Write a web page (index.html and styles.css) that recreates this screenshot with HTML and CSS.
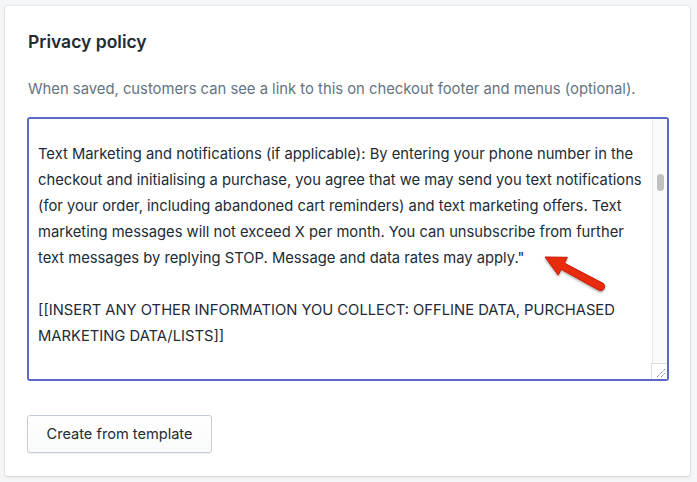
FILE: index.html
```html
<!DOCTYPE html>
<html>
<head>
<meta charset="utf-8">
<link rel="stylesheet" href="styles.css">
</head>
<body>
<div class="card">
  <h2 class="title">Privacy policy</h2>
  <p class="help">When saved, customers can see a link to this on checkout footer and menus (optional).</p>
  <div class="field">
    <div class="content">
      <div class="line">Text Marketing and notifications (if applicable): By entering your phone number in the</div>
      <div class="line">checkout and initialising a purchase, you agree that we may send you text notifications</div>
      <div class="line">(for your order, including abandoned cart reminders) and text marketing offers. Text</div>
      <div class="line">marketing messages will not exceed X per month. You can unsubscribe from further</div>
      <div class="line">text messages by replying STOP. Message and data rates may apply."</div>
      <div class="line">&nbsp;</div>
      <div class="line">[[INSERT ANY OTHER INFORMATION YOU COLLECT: OFFLINE DATA, PURCHASED</div>
      <div class="line">MARKETING DATA/LISTS]]</div>
    </div>
    <div class="scrollbar">
      <div class="thumb"></div>
      <div class="grip">
        <svg width="15" height="15" viewBox="0 0 15 15"><path d="M5 13 L13 5 M9 13 L13 9" stroke="#555" stroke-width="1" stroke-dasharray="1 1" fill="none"/></svg>
      </div>
    </div>
  </div>
  <div class="actions">
    <button class="btn">Create from template</button>
  </div>
</div>
<svg class="arrow" width="697" height="482" viewBox="0 0 697 482">
  <defs>
    <filter id="sh" x="-20%" y="-20%" width="140%" height="160%">
      <feDropShadow dx="0" dy="1.5" stdDeviation="1.2" flood-color="#000" flood-opacity="0.35"/>
    </filter>
  </defs>
  <path d="M545 257 L567.4 257.3 L564.4 263.1 L603.5 283.6 Q606 286 603.5 289.5 Q601 291.5 598.5 290 L561.2 269.3 L558.2 275.1 Z" fill="#e8290e" stroke="#c81c05" stroke-width="1" stroke-linejoin="round" filter="url(#sh)"/>
</svg>
</body>
</html>
```
FILE: styles.css
```css
html, body {
  margin: 0;
  padding: 0;
}
body {
  background: #f4f6f8;
  width: 697px;
  height: 482px;
  padding: 6px 7px 6px 5px;
  box-sizing: border-box;
  font-family: Inter, "Liberation Sans", sans-serif;
  color: #212b36;
  position: relative;
}
.card {
  background: #fff;
  border-radius: 3px;
  box-shadow: 0 0 0 1px rgba(63, 63, 68, 0.05), 0 1px 3px 0 rgba(63, 63, 68, 0.15);
  height: 470px;
  box-sizing: border-box;
  padding: 24px 21px 0 22px;
}
.title {
  margin: 0 0 0 1px;
  font-size: 17.5px;
  font-weight: 600;
  line-height: 24px;
  color: #212b36;
}
.help {
  margin: 25px 0 0 1px;
  font-size: 14.8px;
  line-height: 20px;
  color: #637381;
}
.field {
  margin-top: 18px;
  height: 264px;
  box-sizing: border-box;
  border: 2px solid #5c6ac4;
  border-radius: 3px;
  display: flex;
  overflow: hidden;
}
.content {
  flex: 1;
  padding: 22px 0 0 9px;
  font-size: 14.75px;
  line-height: 26px;
  color: #212b36;
  overflow: hidden;
}
.line {
  white-space: nowrap;
}
.scrollbar {
  width: 15px;
  box-sizing: border-box;
  border-left: 1px solid #e8e8e8;
  background: #fafafa;
  display: flex;
  flex-direction: column;
  align-items: center;
}
.thumb {
  width: 7px;
  height: 17px;
  margin-top: 55px;
  margin-left: 1px;
  border-radius: 4px;
  background: #c1c1c1;
}
.grip {
  margin-top: auto;
  width: 16px;
  height: 16px;
  margin-left: -2px;
  box-sizing: border-box;
  border-top: 1px solid #dcdcdc;
  border-left: 1px solid #dcdcdc;
  background: #fff;
}
.grip svg {
  display: block;
}
.actions {
  margin-top: 34px;
  display: flex;
}
.btn {
  width: 185px;
  height: 38px;
  border: 1px solid #c4cdd5;
  border-radius: 3px;
  background: linear-gradient(to bottom, #fff, #f9fafb);
  box-shadow: 0 1px 0 0 rgba(22, 29, 37, 0.05);
  font-family: Inter, "Liberation Sans", sans-serif;
  font-size: 14.6px;
  color: #212b36;
  padding: 0;
}
.arrow {
  position: absolute;
  left: 0;
  top: 0;
  pointer-events: none;
}
```
